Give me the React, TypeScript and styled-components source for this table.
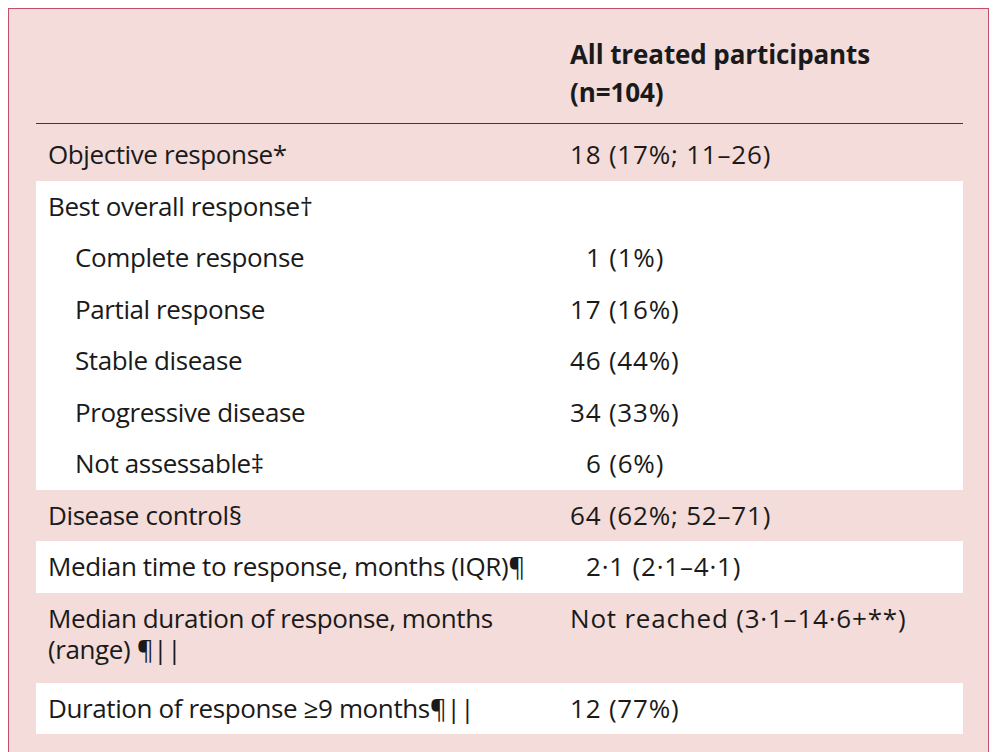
import React from "react";
import styled, { createGlobalStyle } from "styled-components";

const Global = createGlobalStyle`
  html, body { margin: 0; padding: 0; background: #ffffff; }
  body { font-family: "Open Sans", "Noto Sans", sans-serif; color: #1a1a1a; overflow: hidden; }
`;

const Frame = styled.div`
  box-sizing: border-box;
  margin: 8px 0 0 8px;
  width: 981px;
  background: #f3dcd9;
  border: 1px solid #c2506a;
  border-bottom: none;
  padding: 26px 25px 30px 27px;
`;

const Header = styled.div`
  display: grid;
  grid-template-columns: 534px 1fr;
  border-bottom: 1px solid #3a3a3a;
  padding-bottom: 12px;
`;

const HeadCell = styled.div`
  font-weight: 700;
  font-size: 26px;
  line-height: 38px;
  letter-spacing: -0.1px;
`;

const Band = styled.div<{ $white?: boolean }>`
  background: ${(p) => (p.$white ? "#ffffff" : "transparent")};
`;

const Row = styled.div<{ $top?: number; $bottom?: number }>`
  display: grid;
  grid-template-columns: 534px 1fr;
  padding-top: ${(p) => p.$top ?? 10}px;
  padding-bottom: ${(p) => p.$bottom ?? 10}px;
  font-size: 26px;
  line-height: 31.5px;
`;

const Label = styled.div<{ $sub?: boolean }>`
  padding-left: ${(p) => (p.$sub ? 39 : 12)}px;
  padding-right: 20px;
  letter-spacing: -0.4px;
`;

const Value = styled.div<{ $indent?: boolean }>`
  padding-left: ${(p) => (p.$indent ? 16 : 0)}px;
  letter-spacing: 0.8px;
  font-variant-numeric: tabular-nums;
`;

type Item = { label: string; value?: string; sub?: boolean; indent?: boolean };

const block: Item[] = [
  { label: "Best overall response†" },
  { label: "Complete response", value: "1 (1%)", sub: true, indent: true },
  { label: "Partial response", value: "17 (16%)", sub: true },
  { label: "Stable disease", value: "46 (44%)", sub: true },
  { label: "Progressive disease", value: "34 (33%)", sub: true },
  { label: "Not assessable‡", value: "6 (6%)", sub: true, indent: true },
];

export default function App() {
  return (
    <>
      <Global />
      <Frame>
        <Header>
          <div />
          <HeadCell>
            All treated participants
            <br />
            (n=104)
          </HeadCell>
        </Header>
        <Band>
          <Row $top={15} $bottom={10}>
            <Label>Objective response*</Label>
            <Value>18 (17%; 11–26)</Value>
          </Row>
        </Band>
        <Band $white>
          {block.map((it) => (
            <Row key={it.label}>
              <Label $sub={it.sub}>{it.label}</Label>
              <Value $indent={it.indent}>{it.value ?? ""}</Value>
            </Row>
          ))}
        </Band>
        <Band>
          <Row>
            <Label>Disease control§</Label>
            <Value>64 (62%; 52–71)</Value>
          </Row>
        </Band>
        <Band $white>
          <Row>
            <Label>Median time to response, months (IQR)¶</Label>
            <Value $indent>2·1 (2·1–4·1)</Value>
          </Row>
        </Band>
        <Band>
          <Row $top={10} $bottom={17}>
            <Label>Median duration of response, months (range) ¶||</Label>
            <Value>Not reached (3·1–14·6+**)</Value>
          </Row>
        </Band>
        <Band $white>
          <Row>
            <Label>Duration of response ≥9 months¶||</Label>
            <Value>12 (77%)</Value>
          </Row>
        </Band>
      </Frame>
    </>
  );
}
